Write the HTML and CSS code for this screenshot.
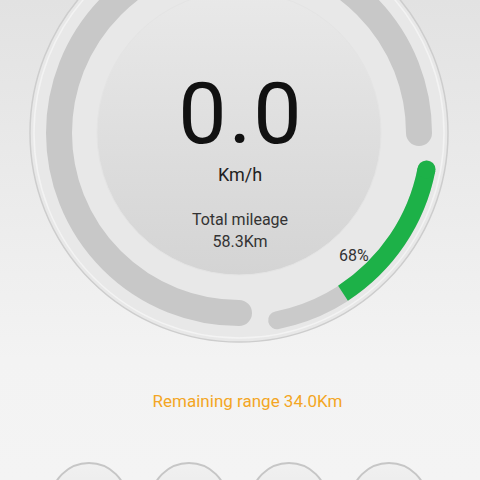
FILE: index.html
```html
<!DOCTYPE html>
<html>
<head>
    <meta charset="UTF-8">
    <meta name="viewport" content="width=device-width, initial-scale=1.0">
    <title>Scooter</title>
    <link rel="stylesheet" href="styles.css">
</head>
<body>
<div class="screen">

    <div class="gauge">
        <svg class="dial" width="480" height="350" viewBox="0 0 480 350">
            <defs>
                <linearGradient id="face" x1="0" y1="0" x2="0" y2="1">
                    <stop offset="0" stop-color="#e9e9e9"/>
                    <stop offset="1" stop-color="#d4d4d4"/>
                </linearGradient>
            </defs>
            <!-- outer rim -->
            <circle cx="239" cy="133" r="209" fill="#e8e8e8" stroke="#cdcdcd" stroke-width="1.5"/>
            <circle cx="239" cy="133" r="205" fill="none" stroke="#f3f3f3" stroke-width="1.5"/>
            <!-- speed track -->
            <path d="M 239 313 A 180 180 0 1 1 419 133" fill="none" stroke="#c8c8c8" stroke-width="26" stroke-linecap="round"/>
            <!-- battery track -->
            <path d="M 426.5 169.4 A 191 191 0 0 1 277.1 320.2" fill="none" stroke="#cacaca" stroke-width="18" stroke-linecap="round"/>
            <path d="M 426.5 169.4 A 191 191 0 0 1 343 293.2" fill="none" stroke="#1db148" stroke-width="18"/>
            <circle cx="426.5" cy="169.4" r="9" fill="#1db148"/>
            <!-- face -->
            <circle cx="239" cy="133" r="142" fill="url(#face)" stroke="#e4e4e4" stroke-width="1"/>
        </svg>

        <div class="readout">
            <div class="speed">0.0</div>
            <div class="unit">Km/h</div>
            <div class="mileage">Total mileage<br>58.3Km</div>
        </div>

        <div class="battery">68%</div>
    </div>

    <div class="range">Remaining range 34.0Km</div>

    <div class="buttons">
        <div class="btn"></div>
        <div class="btn"></div>
        <div class="btn"></div>
        <div class="btn"></div>
    </div>

</div>
</body>
</html>
```

FILE: styles.css
```css
body {
    margin: 0;
    font-family: Roboto, "Liberation Sans", sans-serif;
}

.screen {
    width: 480px;
    height: 480px;
    overflow: hidden;
    background: linear-gradient(#e2e2e2, #f3f3f3 75%, #f4f4f4);
}

.gauge {
    position: relative;
    display: grid;
    height: 350px;
}

.dial,
.readout {
    grid-area: 1 / 1;
}

.dial {
    display: block;
}

.readout {
    display: flex;
    flex-direction: column;
    align-items: center;
    padding-top: 71px;
}

.speed {
    font-size: 86px;
    line-height: 86px;
    letter-spacing: 2px;
    margin-left: 2px;
    color: #111;
}

.unit {
    margin-top: 9px;
    font-size: 18px;
    line-height: 18px;
    color: #222;
}

.mileage {
    margin-top: 25px;
    font-size: 16px;
    line-height: 22px;
    text-align: center;
    color: #333;
}

.battery {
    position: absolute;
    left: 339px;
    top: 248px;
    font-size: 16px;
    line-height: 16px;
    color: #333;
}

.range {
    padding-top: 41px;
    padding-left: 15px;
    font-size: 17px;
    line-height: 20px;
    text-align: center;
    color: #f3a624;
}

.buttons {
    display: flex;
    justify-content: center;
    gap: 22px;
    margin-top: 51px;
    padding-right: 2px;
}

.btn {
    width: 74px;
    height: 74px;
    border: 2px solid #c6c6c6;
    border-radius: 50%;
    background: linear-gradient(#f0f0f0, #e6e6e6);
    flex-shrink: 0;
}
```
